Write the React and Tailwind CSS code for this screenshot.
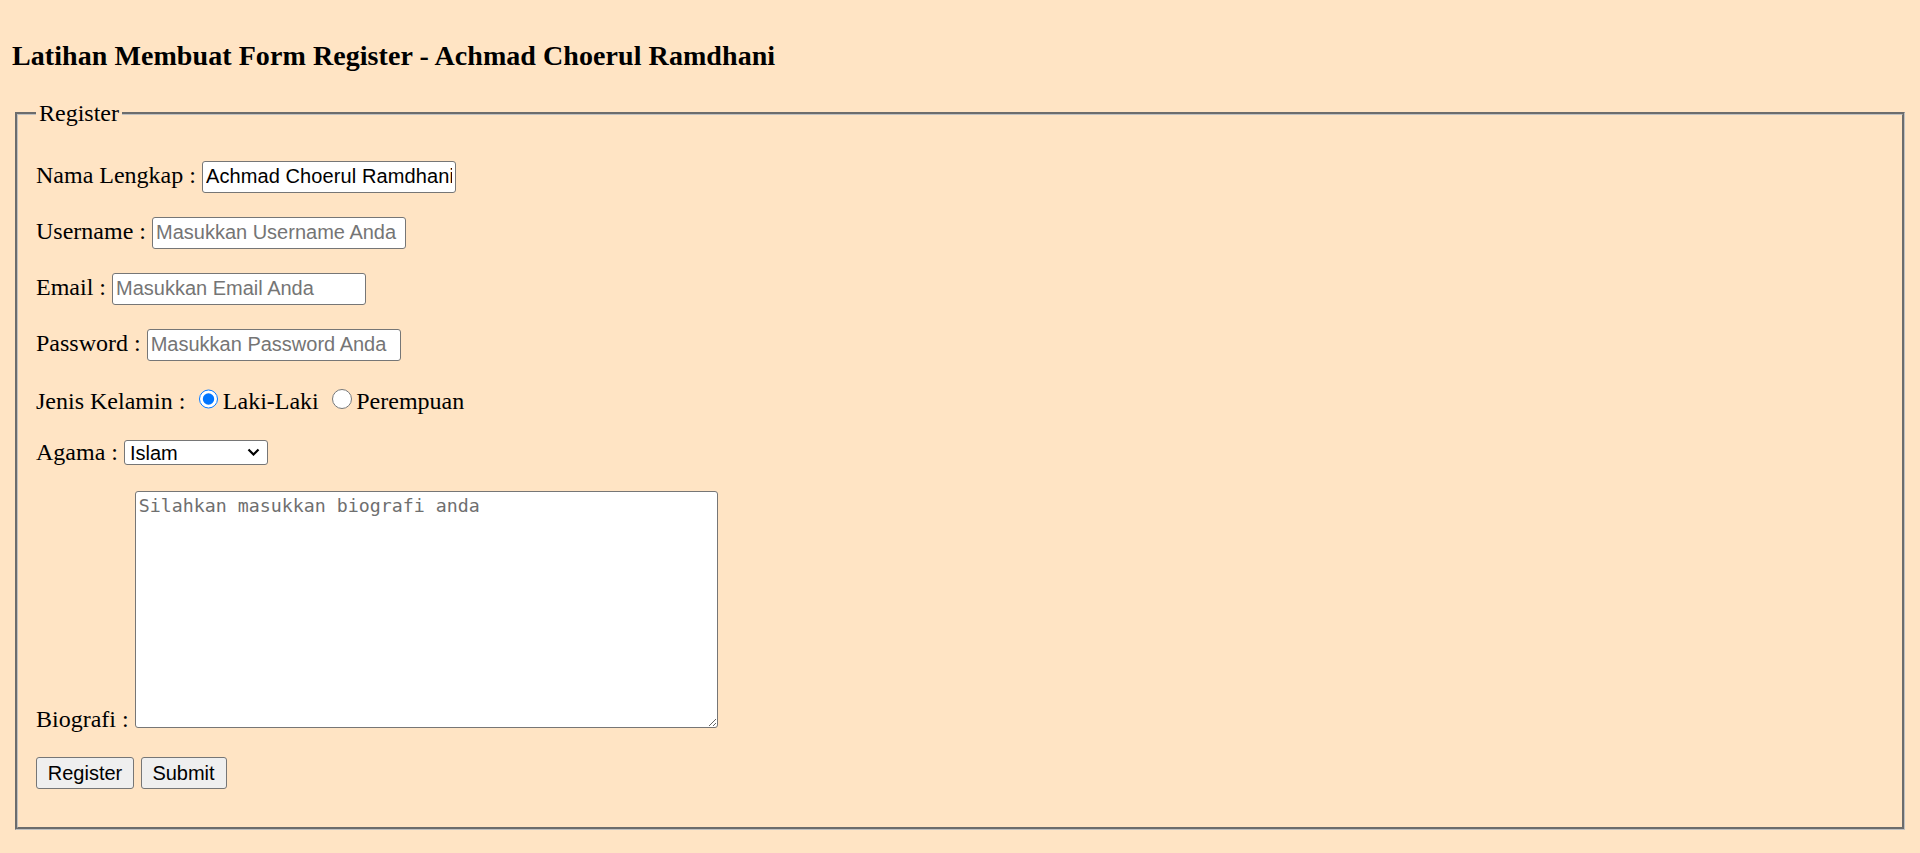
import React from "react";

const inputCls =
  "ml-[6px] h-[32px] w-[254px] rounded-[3px] border-[1.5px] border-[#767676] bg-white px-[3px] py-[1.5px] font-['Liberation_Sans',Arial,sans-serif] text-[20px] leading-[normal] text-black outline-none placeholder:text-[#757575]";

const buttonCls =
  "h-[31.5px] rounded-[3px] border-[1.5px] border-[#767676] bg-[#efefef] text-center font-['Liberation_Sans',Arial,sans-serif] text-[20px] leading-[normal] text-black";

const App = () => {
  return (
    <div className="min-h-screen bg-[#ffe4c4] p-[12px] font-['Liberation_Serif','Times_New_Roman',serif] text-black">
      <h3 className="my-[28px] text-[28px] font-bold leading-[normal] tracking-[0.07px]">
        Latihan Membuat Form Register - Achmad Choerul Ramdhani
      </h3>

      <form onSubmit={(e) => e.preventDefault()}>
        <fieldset className="mx-[3px] border-[3px] border-[#c0c0c0] px-[18px] pt-[8.4px] pb-[38px] [--tw-border-style:groove] [border-style:groove]">
          <legend className="px-[3px] text-[24px] leading-[normal]">Register</legend>

          <div className="mt-[25.5px] flex flex-col gap-[24px] text-[24px] leading-[normal]">
            <div className="flex items-baseline">
              <span>Nama Lengkap :</span>
              <input
                type="text"
                defaultValue="Achmad Choerul Ramdhani"
                className={`${inputCls} tracking-[0.1px]`}
              />
            </div>

            <div className="flex items-baseline">
              <span>Username :</span>
              <input type="text" placeholder="Masukkan Username Anda" className={inputCls} />
            </div>

            <div className="flex items-baseline">
              <span>Email :</span>
              <input type="email" placeholder="Masukkan Email Anda" className={inputCls} />
            </div>

            <div className="flex items-baseline">
              <span>Password :</span>
              <input type="password" placeholder="Masukkan Password Anda" className={inputCls} />
            </div>

            <div className="flex items-baseline">
              <span>Jenis Kelamin :</span>
              <input
                type="radio"
                name="jk"
                defaultChecked
                className="ml-[13.5px] mr-[4.5px] mt-[4.5px] h-[19.5px] w-[19.5px]"
              />
              <span>Laki-Laki</span>
              <input
                type="radio"
                name="jk"
                className="ml-[13.5px] mr-[4.5px] mt-[4.5px] h-[19.5px] w-[19.5px]"
              />
              <span>Perempuan</span>
            </div>

            <div className="flex items-baseline">
              <span>Agama :</span>
              <span className="relative ml-[6px] inline-flex">
                <select className="h-[25px] w-[144px] appearance-none rounded-[3px] border-[1.5px] border-[#767676] bg-white pl-[5px] font-['Liberation_Sans',Arial,sans-serif] text-[20px] leading-[normal] text-black outline-none">
                  <option>Islam</option>
                  <option>Kristen</option>
                  <option>Katolik</option>
                  <option>Hindu</option>
                  <option>Buddha</option>
                  <option>Konghucu</option>
                </select>
                <svg
                  className="pointer-events-none absolute right-[8px] top-[8px]"
                  width="13"
                  height="8"
                  viewBox="0 0 13 8"
                  fill="none"
                >
                  <polyline points="1.5,1.5 6.5,6.5 11.5,1.5" stroke="#000" strokeWidth="2.2" />
                </svg>
              </span>
            </div>

            <div className="flex items-end pb-[5px]">
              <span className="mb-[-5px]">Biografi :</span>
              <textarea
                placeholder="Silahkan masukkan biografi anda"
                className="ml-[6px] mt-[1.5px] h-[237px] w-[583px] resize rounded-[3px] border-[1.5px] border-[#767676] bg-white p-[3px] font-['DejaVu_Sans_Mono',monospace] text-[18.3px] leading-[normal] text-black outline-none placeholder:text-[#6f6f6f]"
              />
            </div>

            <div className="flex items-baseline">
              <button type="button" className={`${buttonCls} w-[98px]`}>
                Register
              </button>
              <button type="submit" className={`${buttonCls} ml-[6.5px] w-[86px]`}>
                Submit
              </button>
            </div>
          </div>
        </fieldset>
      </form>
    </div>
  );
};

export default App;
